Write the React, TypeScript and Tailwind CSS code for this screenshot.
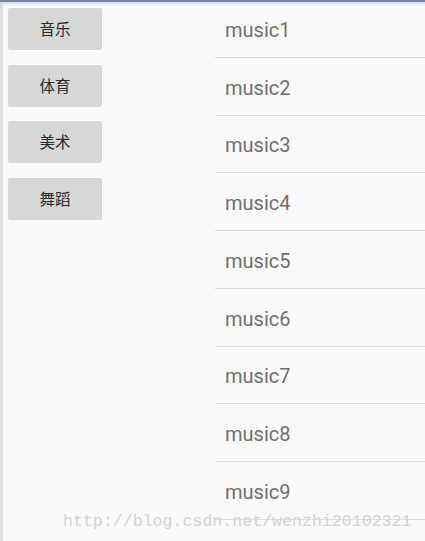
import React from 'react';

const categories = ['音乐', '体育', '美术', '舞蹈'];
const items = Array.from({ length: 10 }, (_, i) => `music${i + 1}`);

const App = () => {
  return (
    <div
      className="relative w-[425px] h-[541px] overflow-hidden bg-[#fafafa] flex"
      style={{ fontFamily: 'Roboto, "Noto Sans CJK SC", sans-serif' }}
    >
      {/* top toolbar edge */}
      <div className="absolute top-0 left-0 right-0 h-[2px] bg-[#7c84aa]" />
      <div className="absolute top-[2px] left-0 right-0 h-[4px] bg-gradient-to-b from-[#d5d6dc] to-transparent" />

      <div className="w-[3px] shrink-0 bg-[#e3e2de]" />

      <div className="w-[212px] shrink-0 flex flex-col gap-[14.5px] pt-[8px] pl-[5px]">
        {categories.map((c) => (
          <button
            key={c}
            className="w-[94px] h-[42px] rounded-[2px] bg-[#d6d7d7] text-[15.5px] text-[#2a2a2a] flex items-center justify-center"
            style={{ fontFamily: '"Noto Sans CJK SC", sans-serif' }}
          >
            {c}
          </button>
        ))}
      </div>

      <ul className="flex-1 flex flex-col">
        {items.map((m) => (
          <li
            key={m}
            className="h-[57.75px] shrink-0 border-b border-[#dcdcdc] flex items-center pl-[10px] pt-[3px] text-[20px] text-[#707070]"
          >
            {m}
          </li>
        ))}
      </ul>

      <div
        className="absolute left-[63px] top-[512px] text-[16.6px] leading-[20px] text-[#d4d4d4] whitespace-nowrap"
        style={{ fontFamily: '"Liberation Mono", monospace' }}
      >
        http://blog.csdn.net/wenzhi20102321
      </div>
    </div>
  );
};

export default App;
